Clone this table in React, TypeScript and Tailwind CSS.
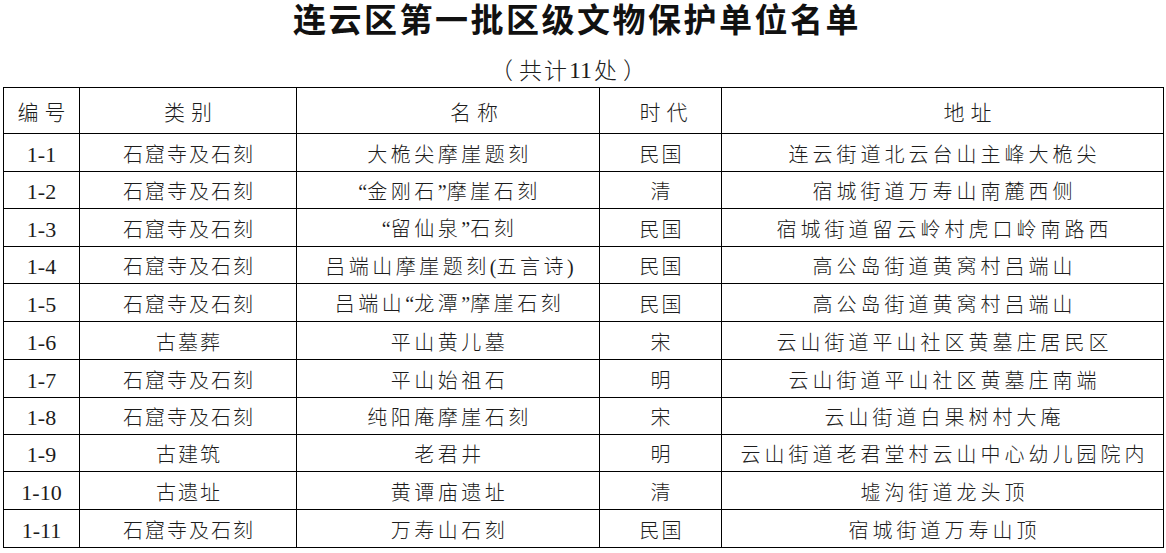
import React from "react";

const rows: [string, string, string, string, string, number][] = [
  ["1-1", "石窟寺及石刻", "大桅尖摩崖题刻", "民国", "连云街道北云台山主峰大桅尖", 38],
  ["1-2", "石窟寺及石刻", "“金刚石”摩崖石刻", "清", "宿城街道万寿山南麓西侧", 37],
  ["1-3", "石窟寺及石刻", "“留仙泉”石刻", "民国", "宿城街道留云岭村虎口岭南路西", 38],
  ["1-4", "石窟寺及石刻", "吕端山摩崖题刻(五言诗)", "民国", "高公岛街道黄窝村吕端山", 37],
  ["1-5", "石窟寺及石刻", "吕端山“龙潭”摩崖石刻", "民国", "高公岛街道黄窝村吕端山", 38],
  ["1-6", "古墓葬", "平山黄儿墓", "宋", "云山街道平山社区黄墓庄居民区", 38],
  ["1-7", "石窟寺及石刻", "平山始祖石", "明", "云山街道平山社区黄墓庄南端", 38],
  ["1-8", "石窟寺及石刻", "纯阳庵摩崖石刻", "宋", "云山街道白果树村大庵", 37],
  ["1-9", "古建筑", "老君井", "明", "云山街道老君堂村云山中心幼儿园院内", 37],
  ["1-10", "古遗址", "黄谭庙遗址", "清", "墟沟街道龙头顶", 38],
  ["1-11", "石窟寺及石刻", "万寿山石刻", "民国", "宿城街道万寿山顶", 38],
];

const cjk = "font-['Noto_Sans_CJK_SC',sans-serif] font-light";
const serif = "font-['Liberation_Serif','Noto_Sans_CJK_SC',serif]";

function Rich({ text }: { text: string }) {
  const parts = text.split(/([“”()])/);
  return (
    <>
      {parts.map((p, i) =>
        /^[“”()]$/.test(p) ? (
          <span key={i} className="font-['Liberation_Serif',serif] font-normal tracking-[0px]">
            {p}
          </span>
        ) : (
          <span key={i}>{p}</span>
        )
      )}
    </>
  );
}

const headers: [string, string][] = [
  ["编号", "pl-[6px]"],
  ["类别", "pl-[6px]"],
  ["名称", "pl-[58px]"],
  ["时代", "pl-[12px]"],
  ["地址", "pl-[56px]"],
];

export default function App() {
  return (
    <div className="w-[1166px] h-[553px] bg-white overflow-hidden text-[#1c1c1c]">
      <div className={`h-[44px] flex items-center justify-center ${serif} font-bold text-[33px] tracking-[2.5px] text-[#111] pr-[12px]`}>
        连云区第一批区级文物保护单位名单
      </div>
      <div className="h-[43px] flex items-center justify-center pt-[8px] pr-[30px] text-[23px] font-['Noto_Sans_CJK_SC',sans-serif] font-light">
        <span className="mr-[6px]">（</span>
        <span className="tracking-[2px]">共计</span>
        <span className="font-['Liberation_Serif',serif] font-normal text-[24px] mr-[2px]">11</span>
        <span>处</span>
        <span className="ml-[6px]">）</span>
      </div>
      <table className="ml-[3px] w-[1160px] table-fixed border-collapse">
        <colgroup>
          <col className="w-[76px]" />
          <col className="w-[217px]" />
          <col className="w-[303px]" />
          <col className="w-[122px]" />
          <col className="w-[442px]" />
        </colgroup>
        <thead>
          <tr className="h-[46px]">
            {headers.map(([h, pad]) => (
              <th
                key={h}
                className={`border border-black p-0 text-center align-middle ${cjk} font-light text-[21px] tracking-[6px] ${pad} pt-[2px]`}
              >
                {h}
              </th>
            ))}
          </tr>
        </thead>
        <tbody>
          {rows.map(([no, cat, name, era, addr, h]) => (
            <tr key={no} style={{ height: h }}>
              <td className={`border border-black p-0 text-center align-middle ${serif} text-[22px] pt-[3px]`}>{no}</td>
              <td className={`border border-black p-0 text-center align-middle ${cjk} text-[20px] tracking-[2px] pl-[2px] pt-[2px]`}>{cat}</td>
              <td className={`border border-black p-0 text-center align-middle ${cjk} text-[20px] tracking-[3.5px] pl-[3px] pt-[2px]`}>
                <Rich text={name} />
              </td>
              <td className={`border border-black p-0 text-center align-middle ${cjk} text-[20px] tracking-[2px] pl-[2px] pt-[2px]`}>{era}</td>
              <td className={`border border-black p-0 text-center align-middle ${cjk} text-[20px] tracking-[4px] pl-[4px] pt-[2px]`}>{addr}</td>
            </tr>
          ))}
        </tbody>
      </table>
    </div>
  );
}
